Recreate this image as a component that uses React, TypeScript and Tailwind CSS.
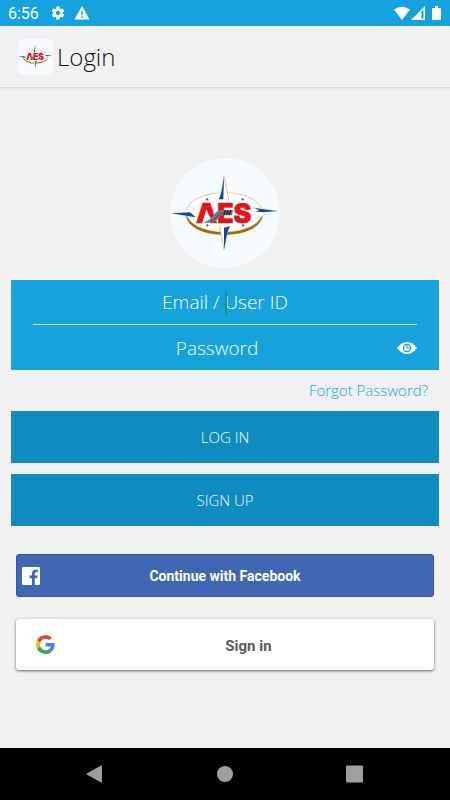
import React from "react";

function Logo({ className, disc }: { className: string; disc: boolean }) {
  return (
    <svg viewBox="30 25 330 330" className={className} role="img" aria-label="AES logo">
      {disc && <circle cx="195" cy="190" r="165" fill="#f7fbff" />}
      <ellipse cx="193" cy="197" rx="115" ry="59" fill="#9a6e08" />
      <ellipse cx="193" cy="188" rx="115" ry="60" fill="#d9b95c" />
      <ellipse cx="193" cy="188" rx="113" ry="58" fill="#fff" />
      <g stroke="#b9c3cf" strokeWidth="1">
        <path d="M192 80L206 149H178Z" fill="#fff" />
        <path d="M192 300L206 228H178Z" fill="#fff" />
        <path d="M35 191L100 171L107 203Z" fill="#fff" />
        <path d="M352 184L281 172L288 204Z" fill="#fff" />
      </g>
      <path d="M192 80L190 149H177L184 128Z" fill="#0b4a8f" />
      <path d="M192 300L192 234L210 230L202 248Z" fill="#0b4a8f" />
      <path d="M35 191L90 188L107 203L88 200Z" fill="#0b4a8f" />
      <path d="M281 174L310 179L352 184L310 188L288 186L298 182Z" fill="#0b4a8f" />
      <path d="M192 80L206 149M192 300L178 228" stroke="#d9b95c" strokeWidth="2" />
      <g fill="#2b6ca8">
        <circle cx="141" cy="149" r="3.5" />
        <circle cx="248" cy="149" r="3.5" />
        <circle cx="142" cy="227" r="3.5" />
        <circle cx="249" cy="227" r="3.5" />
      </g>
      <text
        x="191"
        y="219"
        textAnchor="middle"
        fontFamily="Inter, 'Liberation Sans', sans-serif"
        fontWeight="900"
        fontSize="80"
        fill="#df151b"
        stroke="#df151b"
        strokeWidth="2"
      >
        AES
      </text>
      <path d="M139 181L152 206L148 221H126Z" fill="#fff" />
      <path d="M131 219C147 213 154 204 163 194Q170 182 184 181H220L215 195H192Q181 196 174 207Q166 219 153 219Z" fill="#77797c" />
      <path d="M152 216Q166 208 174 198Q180 190 190 188" stroke="#5a5c5f" strokeWidth="4" fill="none" />
      <path d="M197 182L191 195M205 182L199 195M213 182L207 195" stroke="#161616" strokeWidth="4" />
    </svg>
  );
}

function StatusBar() {
  return (
    <div className="flex h-[26px] items-center bg-[#16a3dd] px-2 text-white">
      <span className="w-[42px] pt-0.5 font-['Roboto',sans-serif] text-base leading-5">6:56</span>
      <svg viewBox="0 0 24 24" className="h-4 w-4" fill="currentColor">
        <path d="M19.14 12.94c.04-.3.06-.61.06-.94 0-.32-.02-.64-.07-.94l2.03-1.58a.49.49 0 0 0 .12-.61l-1.92-3.32a.49.49 0 0 0-.59-.22l-2.39.96a7 7 0 0 0-1.62-.94l-.36-2.54A.48.48 0 0 0 13.92 2.4h-3.84a.48.48 0 0 0-.47.41l-.36 2.54c-.59.24-1.13.57-1.62.94l-2.39-.96a.49.49 0 0 0-.59.22L2.74 8.87a.48.48 0 0 0 .12.61l2.03 1.58a6.6 6.6 0 0 0 0 1.88l-2.03 1.58a.49.49 0 0 0-.12.61l1.92 3.32c.12.22.37.29.59.22l2.39-.96c.5.38 1.03.7 1.62.94l.36 2.54c.05.24.24.41.48.41h3.84c.24 0 .44-.17.47-.41l.36-2.54a7 7 0 0 0 1.62-.94l2.39.96c.22.08.47 0 .59-.22l1.92-3.32a.48.48 0 0 0-.12-.61ZM12 15.2a3.2 3.2 0 1 1 0-6.4 3.2 3.2 0 0 1 0 6.4Z" />
      </svg>
      <svg viewBox="0 0 16 16" className="ml-2 h-4 w-4" fill="currentColor">
        <path fillRule="evenodd" d="M8 1L15.500 14.500H.5ZM7.200 6V10H8.800V6ZM7.200 11.400V13H8.800V11.400Z" />
      </svg>
      <svg viewBox="0 0 50 16" className="ml-auto h-4 w-[50px]" fill="currentColor">
        <path d="M2 4.500Q10 -1 18 4.500L10 15Z" />
        <path fillRule="evenodd" d="M33 1V15H19ZM29.500 6.500V13.500H31.500V4.500Z" />
        <path d="M43 1h3v2h2q1 0 1 1v10q0 1-1 1h-7q-1 0-1-1V4q0-1 1-1h2Z" />
      </svg>
    </div>
  );
}

const thin = "font-['Open_Sans','Noto_Sans',sans-serif] font-light";

export default function App() {
  return (
    <div className="flex min-h-screen flex-col bg-[#f1f1f1]">
      <StatusBar />
      <header className="flex h-[62px] items-center gap-1 border-b border-[#dedede] px-[18px] shadow-xs">
        <div className="flex h-[35px] w-[35px] items-center justify-center rounded-sm bg-[#f7fbff]">
          <Logo className="h-[35px] w-[35px]" disc={false} />
        </div>
        <h1 className={`${thin} text-2xl text-[#111]`}>Login</h1>
      </header>

      <main className="flex flex-col px-[11px] pt-[70px] pb-8">
        <Logo className="h-[110px] w-[110px] self-center" disc />

        <form className="mt-3" onSubmit={(e) => e.preventDefault()}>
          <div className="h-[90px] bg-[#16a3dd] px-[22px]">
            <div className="relative h-[45px] border-b border-[#c5e6f5]">
              <input
                type="text"
                aria-label="Email / User ID"
                placeholder="Email / User ID"
                className={`${thin} h-full w-full text-center text-[19px] text-white outline-none placeholder:text-white placeholder:opacity-100`}
              />
              <span className="absolute top-[11px] left-1/2 h-6 w-0.5 bg-[#0b9a84]" />
            </div>
            <div className="relative h-[45px]">
              <input
                type="password"
                aria-label="Password"
                placeholder="Password"
                className={`${thin} h-full w-full pr-8 pl-4 text-center text-[19px] text-white outline-none placeholder:text-white placeholder:opacity-100`}
              />
              <button type="button" aria-label="Show password" className="absolute inset-y-0 right-0 flex items-center">
                <svg viewBox="0 0 20 14" className="h-3.5 w-5">
                  <path d="M0 7Q4.500 1 10 1T20 7Q15.500 13 10 13T0 7Z" fill="#fff" />
                  <circle cx="10" cy="7" r="3.500" fill="none" stroke="#16a3dd" strokeWidth="1.300" />
                  <path d="M10 4.500V7H12.500" fill="none" stroke="#16a3dd" strokeWidth="1" />
                </svg>
              </button>
            </div>
          </div>
          <div className="flex h-[41px] items-center justify-end pr-[11px]">
            <a href="#forgot" className={`${thin} text-[15px] text-[#16a3dd]`}>Forgot Password?</a>
          </div>
          <div className="flex flex-col gap-[11px]">
            <button type="submit" className={`${thin} h-[52px] bg-[#0e8bbf] text-[15px] text-white`}>LOG IN</button>
            <button type="button" className={`${thin} h-[52px] bg-[#0e8bbf] text-[15px] text-white`}>SIGN UP</button>
          </div>
        </form>

        <div className="mt-7 flex flex-col gap-[22px] px-[5px] font-['Roboto',sans-serif]">
          <button type="button" className="flex h-[43px] items-center rounded-[3px] border border-[#2a58ad] bg-[#4267b2] px-[5px] text-sm font-bold text-white">
            <svg viewBox="0 0 18 18" className="h-[18px] w-[18px]">
              <rect width="18" height="18" rx="1.200" fill="#fff" />
              <path d="M10 18V11.300H7.600V8.500H10V6.300C10 3.900 11.500 2.700 13.600 2.700L15.800 2.800V5.300H14.300C13.100 5.300 12.800 5.900 12.800 6.700V8.500H15.600L15.200 11.300H12.800V18Z" fill="#4267b2" />
            </svg>
            <span className="flex-1 pr-[18px]">Continue with Facebook</span>
          </button>
          <button type="button" className="flex h-[51px] items-center rounded-[3px] bg-white px-5 text-[15px] font-bold text-[#5c5c5c] shadow-[0_1px_3px_rgba(0,0,0,0.6)]">
            <svg viewBox="0 0 48 48" className="h-[19px] w-[19px]">
              <path fill="#EA4335" d="M24 9.500c3.540 0 6.710 1.220 9.210 3.600l6.850-6.850C35.900 2.380 30.470 0 24 0 14.620 0 6.510 5.380 2.560 13.220l7.980 6.190C12.430 13.720 17.740 9.500 24 9.500z" />
              <path fill="#4285F4" d="M46.980 24.550c0-1.570-.15-3.090-.38-4.550H24v9.020h12.940c-.58 2.960-2.260 5.480-4.780 7.180l7.730 6c4.510-4.180 7.090-10.360 7.090-17.650z" />
              <path fill="#FBBC05" d="M10.530 28.590A14.500 14.500 0 0 1 9.770 24c0-1.600.27-3.140.76-4.590l-7.980-6.190A23.900 23.900 0 0 0 0 24c0 3.880.92 7.540 2.560 10.780l7.970-6.190z" />
              <path fill="#34A853" d="M24 48c6.480 0 11.930-2.130 15.890-5.810l-7.730-6c-2.150 1.450-4.920 2.300-8.160 2.300-6.260 0-11.570-4.220-13.470-9.910l-7.980 6.190C6.510 42.620 14.620 48 24 48z" />
            </svg>
            <span className="flex-1 pt-1 pl-7">Sign in</span>
          </button>
        </div>
      </main>

      <nav className="mt-auto flex h-[52px] items-center justify-between bg-black px-[86px] text-[#9e9e9e]">
        <button type="button" aria-label="Back">
          <svg viewBox="0 0 18 18" className="h-[18px] w-[18px]" fill="currentColor">
            <path d="M0 9L15 0.500Q16 .5 16 1.500V16.500Q16 17.500 15 17.500Z" />
          </svg>
        </button>
        <button type="button" aria-label="Home">
          <svg viewBox="0 0 16 16" className="h-4 w-4" fill="currentColor">
            <circle cx="8" cy="8" r="8" />
          </svg>
        </button>
        <button type="button" aria-label="Recent apps">
          <svg viewBox="0 0 18 18" className="h-[18px] w-[18px]" fill="currentColor">
            <rect x="0" y=".5" width="17" height="17" rx="1" />
          </svg>
        </button>
      </nav>
    </div>
  );
}
